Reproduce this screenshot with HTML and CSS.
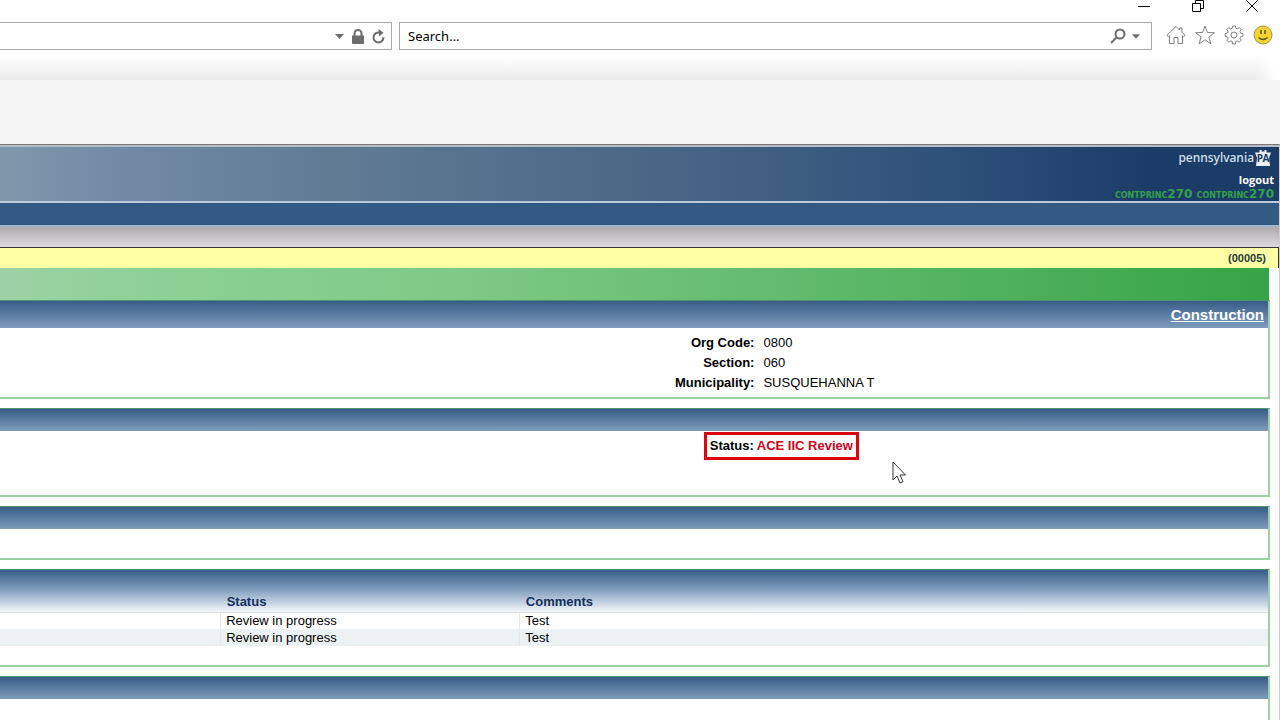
FILE: index.html
```html
<!DOCTYPE html>
<html lang="en">
  <head>
    <meta charset="UTF-8" />
    <meta name="viewport" content="width=device-width, initial-scale=1.0" />
    <title>Construction - ACE IIC Review</title>
    <link rel="stylesheet" href="styles.css">
  </head>
  <body>
    <!-- Browser window -->
    <div class="titlebar">
      <button class="win-btn" aria-label="Minimize">
        <svg width="12" height="12" viewBox="0 0 12 12"><path d="M0 6.5h12" /></svg>
      </button>
      <button class="win-btn" aria-label="Restore">
        <svg width="12" height="12" viewBox="0 0 12 12"><path d="M.5 3.5h8v8h-8zM3.5 3.5v-3h8v8h-3" /></svg>
      </button>
      <button class="win-btn" aria-label="Close">
        <svg width="12" height="12" viewBox="0 0 12 12"><path d="M.5 .5l11 11M11.5 .5l-11 11" /></svg>
      </button>
    </div>

    <div class="toolbar">
      <div class="address-box">
        <input class="address-input" type="text" aria-label="Address" />
        <button class="tool-btn" aria-label="Show address list">
          <svg width="9" height="5" viewBox="0 0 9 5"><path class="solid" d="M0 0h9L4.5 5z" /></svg>
        </button>
        <svg class="lock" width="12" height="15" viewBox="0 0 12 15">
          <path class="solid" d="M0 6.500h12V14a1 1 0 0 1-1 1H1a1 1 0 0 1-1-1z" />
          <path class="thick" d="M2.5 7V4.500a3.5 3.5 0 0 1 7 0V7" />
        </svg>
        <button class="tool-btn" aria-label="Refresh">
          <svg width="13" height="15" viewBox="0 0 13 15">
            <path class="thick" d="M7.500 3.500A5 5 0 1 0 11.500 8.300" />
            <path class="solid" d="M6.500 0l5 3.800-4.500 3.700z" />
          </svg>
        </button>
      </div>
      <div class="search-box">
        <input class="search-input" type="text" aria-label="Search" placeholder="Search..." />
        <button class="tool-btn" aria-label="Search">
          <svg width="16" height="16" viewBox="0 0 16 16">
            <circle class="thick" cx="10" cy="6" r="4.500" />
            <path class="thick" d="M6.500 9.500L1 15" />
          </svg>
        </button>
        <button class="tool-btn" aria-label="Search options">
          <svg width="8" height="5" viewBox="0 0 9 5"><path class="solid" d="M0 0h9L4.500 5z" /></svg>
        </button>
      </div>
      <div class="browser-icons">
        <button class="tool-btn" aria-label="Home">
          <svg width="20" height="20" viewBox="0 0 20 20">
            <path class="thin" d="M10 1.500L.8 10.300l1.500 1.400 1.200-1V18.500h4.500v-6h4v6h4.500v-7.800l1.200 1 1.500-1.400-3.200-3V3h-2.500v2z" />
          </svg>
        </button>
        <button class="tool-btn" aria-label="Favorites">
          <svg width="20" height="20" viewBox="0 0 20 20">
            <path class="thin" d="M10 1l2.400 6.500 7 .2-5.500 4.300 2 6.800-5.900-4-5.900 4 2-6.800L.6 7.700l7-.2z" />
          </svg>
        </button>
        <button class="tool-btn" aria-label="Tools">
          <svg width="20" height="20" viewBox="0 0 20 20">
            <path class="thin" d="M8.600 1h2.800l.4 2.300 1.500.6 1.900-1.300 2 2-1.300 1.900.6 1.500 2.400.5v2.800l-2.400.5-.6 1.500 1.300 1.900-2 2-1.900-1.300-1.500.6-.4 2.500H8.600l-.4-2.500-1.500-.6-1.900 1.300-2-2 1.300-1.900-.6-1.500-2.400-.5V8.500l2.400-.5.6-1.500-1.300-1.900 2-2 1.900 1.300 1.500-.6z" />
            <circle class="thin" cx="10" cy="10" r="3" />
          </svg>
        </button>
        <button class="tool-btn" aria-label="Send a smile">
          <svg width="20" height="20" viewBox="0 0 20 20">
            <circle cx="10" cy="10" r="9" fill="#f3d432" stroke="#a0974f" />
            <path d="M8 5v4M12 5v4" stroke="#5c5222" stroke-width="1.500" />
            <path d="M5.500 12.500q4.500 4 9 0" fill="none" stroke="#5c5222" stroke-width="1.200" />
          </svg>
        </button>
      </div>
    </div>
    <div class="toolbar-shade"></div>
    <div class="command-bar"></div>

    <!-- Application -->
    <div class="app">
      <header class="banner">
        <div class="brand">
          <span>pennsylvania</span>
          <svg width="16" height="16" viewBox="0 0 16 16">
            <path fill="#e8eef6" d="M4.500 0h2v1.500h3V0h2v2.500H16l-2 5.500 1 8H1l1-8-2-5.500h4.500z" />
            <text class="keystone" x="8" y="12" text-anchor="middle">PA</text>
          </svg>
        </div>
        <a class="logout" href="#">logout</a>
        <div class="user">contprinc270 contprinc270</div>
      </header>
      <nav class="menu-bar" aria-label="Main menu"></nav>
      <div class="sub-menu"></div>
      <div class="message-bar">(00005)</div>

      <main class="content">
        <div class="page-title"></div>

        <section class="panel">
          <div class="panel-head large"><a href="#">Construction</a></div>
          <dl class="details">
            <dt>Org Code:</dt>
            <dd>0800</dd>
            <dt>Section:</dt>
            <dd>060</dd>
            <dt>Municipality:</dt>
            <dd>SUSQUEHANNA T</dd>
          </dl>
        </section>

        <section class="panel">
          <div class="panel-head"></div>
          <div class="status-row">
            <div class="status-box">
              <span>Status:</span>
              <span class="status-value">ACE IIC Review</span>
            </div>
          </div>
        </section>

        <section class="panel">
          <div class="panel-head"></div>
          <div class="empty"></div>
        </section>

        <section class="panel">
          <table class="reviews">
            <thead>
              <tr>
                <th class="col-first"></th>
                <th class="col-status">Status</th>
                <th>Comments</th>
              </tr>
            </thead>
            <tbody>
              <tr>
                <td></td>
                <td>Review in progress</td>
                <td>Test</td>
              </tr>
              <tr>
                <td></td>
                <td>Review in progress</td>
                <td>Test</td>
              </tr>
            </tbody>
          </table>
        </section>

        <section class="panel">
          <div class="panel-head"></div>
          <div class="empty"></div>
        </section>
      </main>
    </div>

    <svg class="cursor" width="14" height="24" viewBox="0 0 14 24">
      <path d="M1 1v18l4-4 3 7 3-1.300-3-6.700h5.500z" />
    </svg>
  </body>
</html>
```

FILE: styles.css
```css
* {
  margin: 0;
  padding: 0;
  box-sizing: border-box;
}

html,
body {
  height: 100%;
}

body {
  display: flex;
  flex-direction: column;
  overflow: hidden;
  background: #fff;
  color: #000;
  font-family: "Liberation Sans", Arial, sans-serif;
  font-size: 13px;
  line-height: 16px;
}

button {
  border: none;
  background: none;
  cursor: pointer;
}

svg {
  display: block;
  fill: none;
}

/* Browser window */
.titlebar {
  display: flex;
  flex: none;
  justify-content: flex-end;
  gap: 42px;
  height: 22px;
  padding-right: 22px;
}

.win-btn {
  height: 12px;
}

.win-btn path {
  stroke: #000;
}

.toolbar {
  display: flex;
  flex: none;
  gap: 7px;
  height: 28px;
  padding-right: 7px;
}

.address-box,
.search-box {
  display: flex;
  align-items: center;
  border: 1px solid #a9a9a9;
  background: #fff;
}

.address-box {
  flex: 0 0 392px;
  gap: 8px;
  padding-right: 6px;
  border-left: none;
}

.search-box {
  flex: 1;
  gap: 6px;
  padding: 0 11px 0 8px;
}

.address-input,
.search-input {
  flex: 1;
  min-width: 0;
  border: none;
  outline: none;
  background: none;
  font-family: "Noto Sans", sans-serif;
  font-size: 13px;
}

.search-input::placeholder {
  color: #000;
  opacity: 1;
}

.solid {
  fill: #6c6c6c;
}

.thick {
  stroke: #6c6c6c;
  stroke-width: 2;
}

.thin {
  stroke: #808080;
}

.browser-icons {
  display: flex;
  align-items: center;
  gap: 9px;
  padding: 0 0 2px 7px;
}

.toolbar-shade {
  flex: none;
  height: 30px;
  background:
    linear-gradient(to left, #fff 5px, transparent 24px),
    linear-gradient(#fff 20%, #ebebeb);
}

.command-bar {
  flex: none;
  height: 64px;
  background: #f5f5f5;
}

/* Application */
.app {
  display: flex;
  flex: 1;
  flex-direction: column;
  min-height: 0;
  border-top: 1px solid #777;
  border-right: 1px solid #ccc;
}

.banner {
  display: flex;
  flex: none;
  flex-direction: column;
  align-items: flex-end;
  height: 58px;
  padding: 2px 5px 0 0;
  border-top: 2px solid #b8bcc4;
  border-bottom: 2px solid #bccbdc;
  background: linear-gradient(to right, #7f98ab, #7189a5 10%, #607a92 27%, #456384 55%, #2d5079 75%, #1c3c68 90%);
}

.brand {
  display: flex;
  align-items: center;
  gap: 1px;
  height: 18px;
  padding-right: 3px;
  color: #d5e0ee;
  font-family: "Noto Sans", sans-serif;
  font-size: 12px;
  font-weight: 500;
}

.keystone {
  fill: #1c3c68;
  font-family: "Noto Sans", sans-serif;
  font-size: 10px;
  font-weight: bold;
}

.logout {
  margin-top: 5px;
  color: #fff;
  font-family: "Open Sans", sans-serif;
  font-size: 11px;
  font-weight: bold;
  text-decoration: none;
}

.user {
  color: #35a04a;
  font-family: "DejaVu Sans", sans-serif;
  font-size: 12px;
  font-weight: bold;
  font-variant: small-caps;
  line-height: 12px;
}

.menu-bar {
  flex: none;
  height: 22px;
  background: #335a82;
}

.sub-menu {
  flex: none;
  height: 22px;
  border-top: 2px solid #a3b8d0;
  background: linear-gradient(#adabad, #dcdadc);
}

.message-bar {
  flex: none;
  height: 21px;
  padding-right: 12px;
  border-top: 1px solid #333;
  border-right: 1px solid #333;
  background: #ffffa6;
  color: #1e3a3a;
  font-size: 11px;
  font-weight: bold;
  line-height: 20px;
  text-align: right;
}

.content {
  flex: 1;
  padding-right: 9px;
}

.page-title {
  height: 32px;
  margin-right: 1px;
  background: linear-gradient(to right, #9ed1a6, #8fd197 10%, #7fca87 35%, #5fb96b 65%, #35a446);
}

.panel {
  margin-bottom: 9px;
  border-top: 1px solid #4f9470;
  border-right: 2px solid #9dd0a3;
  border-bottom: 2px solid #9dd0a3;
}

.panel-head {
  height: 22px;
  background: linear-gradient(#375d86, #7e9cbd);
}

.panel-head.large {
  height: 27px;
  padding-right: 4px;
  font-size: 15px;
  font-weight: bold;
  line-height: 27px;
  text-align: right;
}

.panel-head a {
  color: #fff;
}

.details {
  display: grid;
  grid-template-columns: 59.5% 1fr;
  gap: 4px 9px;
  padding: 7px 0 6px;
}

.details dt {
  font-weight: bold;
  text-align: right;
}

.status-row {
  height: 64px;
  padding: 1px 0 0 55.5%;
}

.status-box {
  display: inline-flex;
  gap: 3px;
  padding: 3px;
  border: 3px solid #d9060f;
  font-weight: bold;
}

.status-value {
  color: #d0021b;
}

.empty {
  height: 29px;
}

.reviews {
  width: 100%;
  margin-bottom: 19px;
  border-collapse: collapse;
  table-layout: fixed;
}

.reviews thead {
  background: linear-gradient(#375d86, #7e9cbd 45%, #f4f7fb);
}

.reviews th {
  height: 42px;
  padding: 0 0 2px 6px;
  border-bottom: 1px solid #dadce2;
  color: #14305c;
  text-align: left;
  vertical-align: bottom;
}

.reviews td {
  height: 17px;
  padding-left: 5px;
}

.reviews td + td {
  border-left: 1px solid #e6e6e6;
}

.reviews tbody tr:nth-child(even) {
  background: #ecf2f3;
}

.col-first {
  width: 17.4%;
}

.col-status {
  width: 23.6%;
}

.cursor {
  position: absolute;
  top: 461px;
  left: 892px;
}

.cursor path {
  fill: #fff;
  stroke: #333;
}
```
